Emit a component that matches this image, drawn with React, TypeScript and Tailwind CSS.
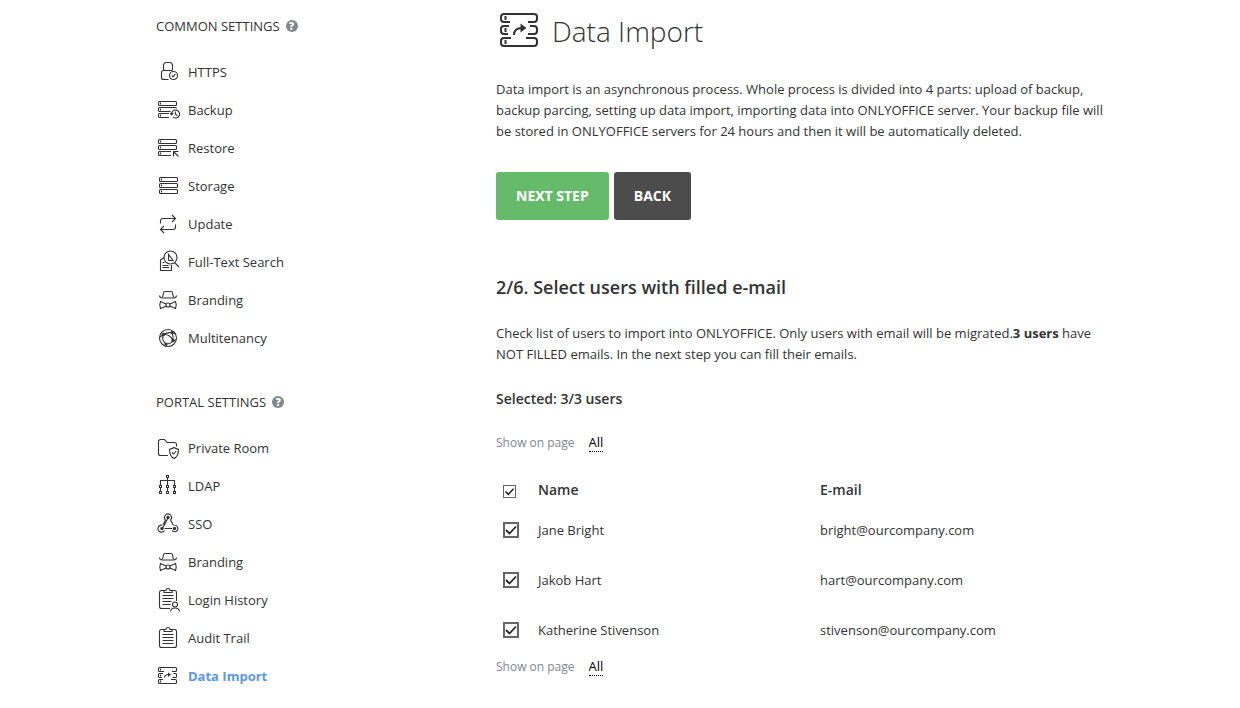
import React, { useState } from 'react';
import clsx from 'clsx';

const Svg = ({ children }: { children: React.ReactNode }) => (
  <svg viewBox="0 0 24 24" className="size-6 shrink-0" fill="none" stroke="#333" strokeWidth="1.1" aria-hidden="true">
    {children}
  </svg>
);

const HttpsIcon = () => (
  <Svg>
    <path d="M7.500 10.500V5.500a3 3 0 0 1 3-3h3a3 3 0 0 1 3 3v4.500" />
    <path d="M12.500 19.500H7.500a2 2 0 0 1-2-2v-5a2 2 0 0 1 2-2h9" />
    <circle cx="17.500" cy="15.500" r="4" />
    <path d="m15.800 15.500 1.300 1.300 2.200-2.600" />
  </Svg>
);

const BackupIcon = () => (
  <Svg>
    <rect x="2.500" y="3.500" width="18" height="4" rx="1" />
    <path d="M14.500 13.500h-11a1 1 0 0 1-1-1v-2a1 1 0 0 1 1-1h16a1 1 0 0 1 1 1M13 19.500H3.500a1 1 0 0 1-1-1v-2a1 1 0 0 1 1-1H13" />
    <path d="M4.500 4.500v2M4.500 10.500v2M4.500 16.500v2" />
    <path d="M15.600 16.500a4 4 0 1 1 1.400 2.600M14 14.800l1.600 1.900 1.700-1.700M19.500 13.500v2.700l1.700 1.600" />
  </Svg>
);

const RestoreIcon = () => (
  <Svg>
    <rect x="2.500" y="3.500" width="18" height="4" rx="1" />
    <rect x="2.500" y="9.500" width="18" height="4" rx="1" />
    <path d="M15 19.500H3.500a1 1 0 0 1-1-1v-2a1 1 0 0 1 1-1H15" />
    <path d="M4.500 4.500v2M4.500 10.500v2M4.500 16.500v2" />
    <path d="M17.500 20.500v-5h5M17.500 15.500l5 5" />
  </Svg>
);

const StorageIcon = () => (
  <Svg>
    <rect x="3.500" y="3.500" width="18" height="4" rx="1" />
    <rect x="3.500" y="9.500" width="18" height="4" rx="1" />
    <rect x="3.500" y="15.500" width="18" height="4" rx="1" />
    <path d="M5.500 4.500v2M5.500 10.500v2M5.500 16.500v2" />
  </Svg>
);

const UpdateIcon = () => (
  <Svg>
    <path d="M4.500 11.500V9a2.500 2.500 0 0 1 2.500-2.500h12.500M16 3l3.500 3.500L16 10" />
    <path d="M19.500 12.500V15a2.500 2.500 0 0 1-2.500 2.500H4.500M8 14l-3.500 3.500L8 21" />
  </Svg>
);

const SearchIcon = () => (
  <Svg>
    <circle cx="14.500" cy="7.500" r="6.500" />
    <path d="m18.500 12.500 4.500 4.500" />
    <path d="M8 7.500 4.500 10v10.500h11V15M12.500 10.500v-6l4.500 6h-4.500" />
    <path d="M6.500 12.500h2M6.500 15.500h6M6.500 17.500h6.500" />
  </Svg>
);

const BrandingIcon = () => (
  <Svg>
    <path d="M6.500 9.500 7.500 5a1.500 1.500 0 0 1 1.500-1.500h6A1.500 1.500 0 0 1 16.500 5l1 4.500" />
    <path d="M3.500 7.500q0 2.500 3 2.500h11q3 0 3-2.500" />
    <path d="m10 16-5.500-2.500q-1.500 3.500 0 7L10 18M14 16l5.500-2.500q1.500 3.500 0 7L14 18" />
    <circle cx="12" cy="17" r="2" />
  </Svg>
);

const MultitenancyIcon = () => (
  <Svg>
    <circle cx="12" cy="12" r="8.500" />
    <path d="M7.500 8.500Q14 8 17 14.500M7.500 8.500q6-3.500 12.500-.500M7.500 8.500Q5 14 10 18M10 18q5 0 7-3.500M16 6.500q1.500 4 1 8M4 11l3.500-2.500M17 14.500l3-.500M10 18v2.500" />
    <g fill="#333" stroke="none">
      <circle cx="7.500" cy="8.500" r="1.700" />
      <circle cx="16" cy="6.500" r="1.500" />
      <circle cx="17" cy="14.500" r="1.700" />
      <circle cx="10" cy="18" r="1.500" />
    </g>
  </Svg>
);

const PrivateRoomIcon = () => (
  <Svg>
    <path d="M12 19.500H4.500a2 2 0 0 1-2-2V5.500a2 2 0 0 1 2-2h4l2.500 3h7.500a2 2 0 0 1 2 2v2" />
    <path d="M18 11.500q2 1.500 4.500 1.700 0 7-4.500 9.300-4.500-2.300-4.500-9.300 2.500-.200 4.500-1.700Z" />
    <path d="m16 16.500 1.500 1.500 2.700-3" />
  </Svg>
);

const LdapIcon = () => (
  <Svg>
    <path d="M11.500 3v8M4.500 11V6.500h14V11M4.500 14v3M11.500 14v3M18.500 14v3" />
    <g strokeWidth="1">
      <rect x="10.500" y="1.500" width="2" height="2" fill="#fff" />
      <rect x="3.500" y="11.500" width="2" height="2" fill="#fff" />
      <rect x="10.500" y="11.500" width="2" height="2" fill="#fff" />
      <rect x="17.500" y="11.500" width="2" height="2" fill="#fff" />
      <rect x="3.500" y="17.500" width="2" height="2" fill="#fff" />
      <rect x="10.500" y="17.500" width="2" height="2" fill="#fff" />
      <rect x="17.500" y="17.500" width="2" height="2" fill="#fff" />
    </g>
  </Svg>
);

const SsoIcon = () => (
  <Svg>
    <path d="M9.500 8A3.500 3.500 0 1 1 14.500 8M8.500 18.500A3.500 3.500 0 1 1 6 13.200M18.500 13.200a3.300 3.300 0 1 1-2.500 5.300" />
    <path d="M12 6 7 15.500M8.500 16.500h7.500M14.500 8l3 5.500M9.500 8l-2.500 5" />
    <g fill="#333" stroke="none">
      <circle cx="12" cy="5.500" r="1.700" />
      <circle cx="6" cy="16.500" r="1.700" />
      <circle cx="18.500" cy="16.500" r="1.700" />
    </g>
  </Svg>
);

const LoginHistoryIcon = () => (
  <Svg>
    <path d="M8 2.500H5.500a2 2 0 0 0-2 2v14a2 2 0 0 0 2 2H14M16 2.500h2.500a2 2 0 0 1 2 2V13" />
    <path d="M8 4.500v-2h2q0-2 2-2t2 2h2v2Z" />
    <path d="M6.500 7.500h11M6.500 10.500h11M6.500 13.500h9M6.500 16.500h8" />
    <circle cx="19" cy="16.500" r="2.500" />
    <path d="M14.500 23.500q.500-3.500 4.500-3.500t4.500 3.500" />
  </Svg>
);

const AuditTrailIcon = () => (
  <Svg>
    <path d="M8 3.500H5.500a2 2 0 0 0-2 2v14a2 2 0 0 0 2 2h13a2 2 0 0 0 2-2v-14a2 2 0 0 0-2-2H16" />
    <path d="M8 5.500v-2h2q0-2 2-2t2 2h2v2Z" />
    <path d="M6.500 8.500h11M6.500 11.500h11M6.500 14.500h11M6.500 17.500h11" />
  </Svg>
);

const DataImportIcon = () => (
  <Svg>
    <path d="M8 7.500H3.500a1 1 0 0 1-1-1v-2a1 1 0 0 1 1-1h16a1 1 0 0 1 1 1v2a1 1 0 0 1-1 1H16" />
    <path d="M7 9.500H3.500a1 1 0 0 0-1 1v2a1 1 0 0 0 1 1H6M17.500 9.500h2a1 1 0 0 1 1 1v2a1 1 0 0 1-1 1h-3" />
    <path d="M7 15.500H3.500a1 1 0 0 0-1 1v2a1 1 0 0 0 1 1h16a1 1 0 0 0 1-1v-2a1 1 0 0 0-1-1H15" />
    <path d="M4.500 4.500v2M4.500 10.500v2M4.500 16.500v2M8.500 13.500q0-3 4.500-3" />
    <path d="m12 8.500 3 2-3 2.500Z" fill="#333" stroke="none" />
  </Svg>
);

const COMMON = [
  { label: 'HTTPS', Icon: HttpsIcon },
  { label: 'Backup', Icon: BackupIcon },
  { label: 'Restore', Icon: RestoreIcon },
  { label: 'Storage', Icon: StorageIcon },
  { label: 'Update', Icon: UpdateIcon },
  { label: 'Full-Text Search', Icon: SearchIcon },
  { label: 'Branding', Icon: BrandingIcon },
  { label: 'Multitenancy', Icon: MultitenancyIcon },
];

const PORTAL = [
  { label: 'Private Room', Icon: PrivateRoomIcon },
  { label: 'LDAP', Icon: LdapIcon },
  { label: 'SSO', Icon: SsoIcon },
  { label: 'Branding', Icon: BrandingIcon },
  { label: 'Login History', Icon: LoginHistoryIcon },
  { label: 'Audit Trail', Icon: AuditTrailIcon },
  { label: 'Data Import', Icon: DataImportIcon, active: true },
];

const USERS = [
  { name: 'Jane Bright', email: 'bright@ourcompany.com' },
  { name: 'Jakob Hart', email: 'hart@ourcompany.com' },
  { name: 'Katherine Stivenson', email: 'stivenson@ourcompany.com' },
];

type MenuItem = { label: string; Icon: () => React.ReactNode; active?: boolean };

const MenuSection = ({ title, items }: { title: string; items: MenuItem[] }) => (
  <nav aria-label={title}>
    <div className="mb-2 flex h-[38px] items-center gap-1.5">
      <h2>{title}</h2>
      <button
        aria-label={`About ${title.toLowerCase()}`}
        className="flex size-3 items-center justify-center rounded-full bg-[#83888d] text-[10px] leading-3 font-extrabold text-white"
      >
        ?
      </button>
    </div>
    <ul>
      {items.map(({ label, Icon, active }) => (
        <li key={label}>
          <a href="#" className={clsx('flex h-[38px] items-center gap-2', active && 'font-bold text-[#5c97e6]')}>
            <Icon />
            {label}
          </a>
        </li>
      ))}
    </ul>
  </nav>
);

type CheckProps = { label: string; checked: boolean; onChange: () => void; small?: boolean };

const Check = ({ label, checked, onChange, small }: CheckProps) => (
  <span className={clsx('grid', small ? 'size-[13px]' : 'size-4')}>
    <input
      type="checkbox"
      aria-label={label}
      checked={checked}
      onChange={onChange}
      className={clsx(
        'col-start-1 row-start-1 size-full appearance-none border-[#666] bg-white',
        small ? 'border' : 'border-2'
      )}
    />
    {checked && (
      <svg
        viewBox="0 0 16 16"
        className="pointer-events-none col-start-1 row-start-1 size-full"
        fill="none"
        stroke="#222"
        strokeWidth="1.800"
        aria-hidden="true"
      >
        <path d="m3 8 3.500 3.500L13 4.500" />
      </svg>
    )}
  </span>
);

const PageSize = () => (
  <div className="flex items-center gap-3.5 text-[#83888d]">
    <span className="text-xs">Show on page</span>
    <button className="border-b border-dotted border-black leading-[18px] text-black">All</button>
  </div>
);

const App = () => {
  const [selected, setSelected] = useState(USERS.map(u => u.email));
  const allSelected = selected.length === USERS.length;

  const toggle = (email: string) => {
    setSelected(selected.includes(email) ? selected.filter(e => e !== email) : [...selected, email]);
  };

  return (
    <div className="flex min-h-screen bg-white pr-8 pl-39 font-['Open_Sans',sans-serif] text-[13px] leading-[21px] text-[#333]">
      <aside className="flex w-[340px] shrink-0 flex-col gap-[26px] pt-[7px]">
        <MenuSection title="COMMON SETTINGS" items={COMMON} />
        <MenuSection title="PORTAL SETTINGS" items={PORTAL} />
      </aside>

      <main className="max-w-[620px] min-w-0 flex-1 pt-[9px]">
        <header className="flex items-center gap-3.5">
          <svg viewBox="0 1 42 40" className="h-10 w-[42px]" fill="none" stroke="#333" strokeWidth="2" aria-hidden="true">
            <path d="M14 12H8a3 3 0 0 1-3-3V7a3 3 0 0 1 3-3h30a3 3 0 0 1 3 3v2a3 3 0 0 1-3 3h-6" />
            <path d="M13 16H8a3 3 0 0 0-3 3v2a3 3 0 0 0 3 3h4M34 16h4a3 3 0 0 1 3 3v2a3 3 0 0 1-3 3h-6" />
            <path d="M15 28H8a3 3 0 0 0-3 3v2a3 3 0 0 0 3 3h30a3 3 0 0 0 3-3v-2a3 3 0 0 0-3-3h-8" />
            <path d="M9.500 6v4M9.500 18v4M9.500 30v4M18 25q0-7 8-7" />
            <path d="m24.500 13.500 6 4.500-6 4.500Z" fill="#333" stroke="none" />
          </svg>
          <h1 className="text-[28px] leading-11 font-light">Data Import</h1>
        </header>

        <p className="mt-[26px]">
          Data import is an asynchronous process. Whole process is divided into 4 parts: upload of backup, backup
          parcing, setting up data import, importing data into ONLYOFFICE server. Your backup file will be stored in
          ONLYOFFICE servers for 24 hours and then it will be automatically deleted.
        </p>

        <div className="mt-[30px] flex gap-[5px] text-sm font-bold text-white">
          <button className="h-12 rounded-[3px] bg-[#66bb6a] px-5">NEXT STEP</button>
          <button className="h-12 rounded-[3px] bg-[#4c4c4c] px-5">BACK</button>
        </div>

        <h2 className="mt-[55px] text-lg leading-6 font-semibold">2/6. Select users with filled e-mail</h2>
        <p className="mt-6">
          Check list of users to import into ONLYOFFICE. Only users with email will be migrated.
          <b>{USERS.length} users</b> have NOT FILLED emails. In the next step you can fill their emails.
        </p>
        <p className="mt-6 mb-6 text-sm font-semibold">
          Selected: {selected.length}/{USERS.length} users
        </p>

        <PageSize />

        <table className="mt-[23px] mb-0.5 w-full table-fixed text-left">
          <thead>
            <tr className="h-[30px] text-sm">
              <th className="w-[42px] pt-0.5 pl-[7px]">
                <Check
                  small
                  label="Select all users"
                  checked={allSelected}
                  onChange={() => setSelected(allSelected ? [] : USERS.map(u => u.email))}
                />
              </th>
              <th className="w-[282px] font-semibold">Name</th>
              <th className="font-semibold">E-mail</th>
            </tr>
          </thead>
          <tbody>
            {USERS.map(user => (
              <tr key={user.email} className="h-[50px]">
                <td className="pl-[7px]">
                  <Check
                    label={`Select ${user.name}`}
                    checked={selected.includes(user.email)}
                    onChange={() => toggle(user.email)}
                  />
                </td>
                <td>{user.name}</td>
                <td>{user.email}</td>
              </tr>
            ))}
          </tbody>
        </table>

        <PageSize />
      </main>
    </div>
  );
};

export default App;
